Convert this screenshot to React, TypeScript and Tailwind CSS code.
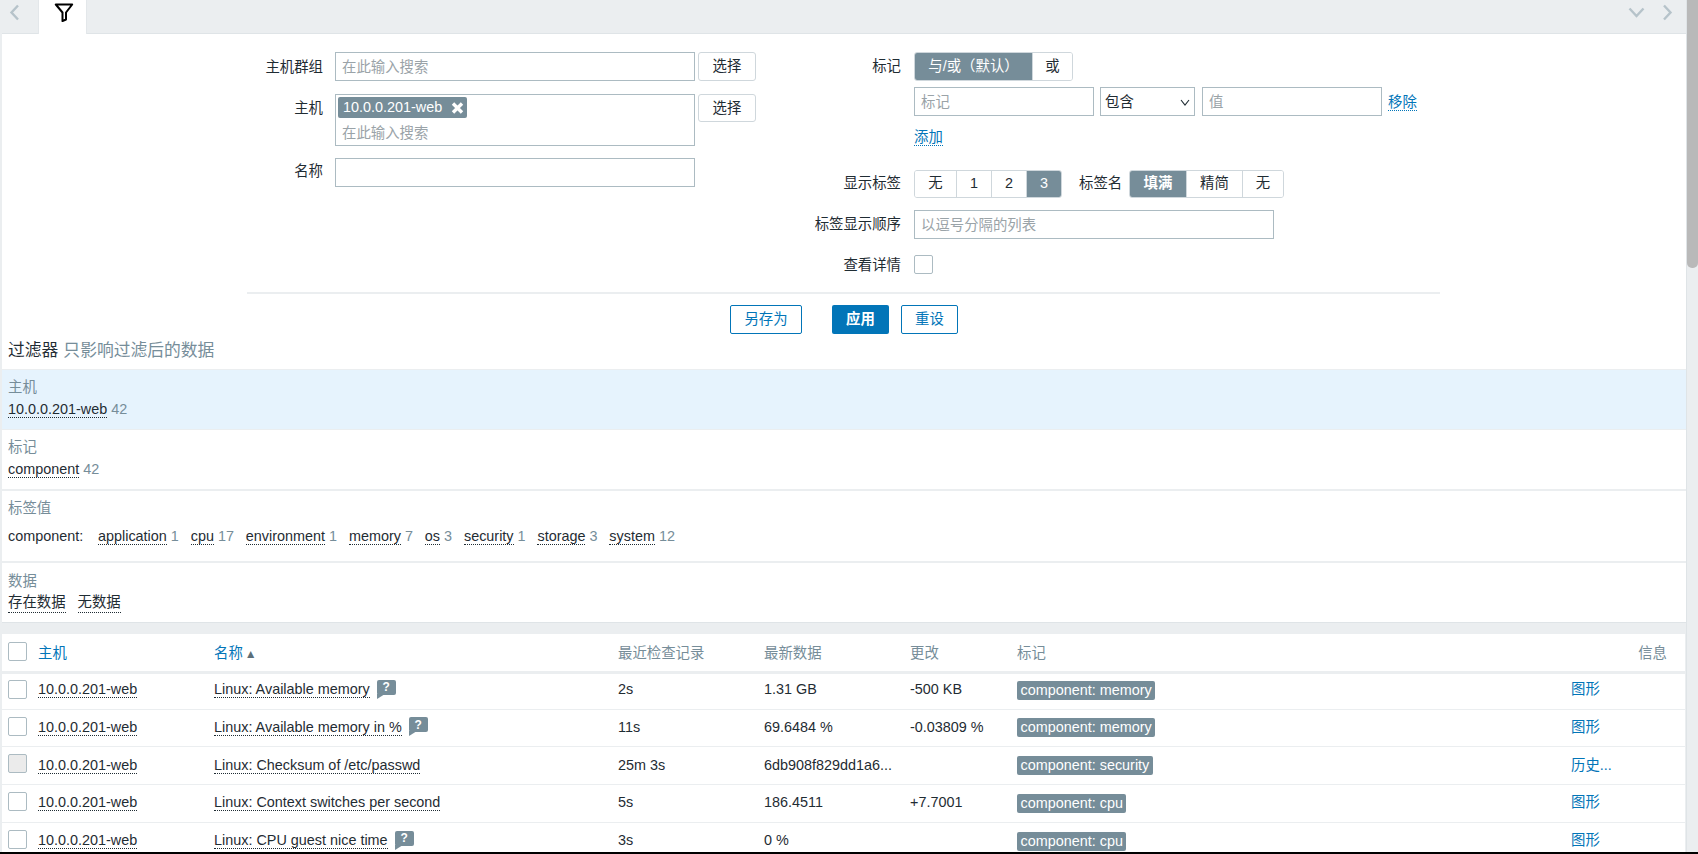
import type { ReactNode } from 'react';

const GREY = 'text-[#768d99]';

type Row = {
  name: string;
  help?: boolean;
  check: string;
  value: string;
  change?: string;
  tag: string;
  action: string;
  disabled?: boolean;
  height: string;
  nudge: string;
  chipNudge: string;
};

const rows: Row[] = [
  { name: 'Linux: Available memory', help: true, check: '2s', value: '1.31 GB', change: '-500 KB', tag: 'component: memory', action: '图形', height: 'h-[37px]', nudge: 'pb-[2px]', chipNudge: '' },
  { name: 'Linux: Available memory in %', help: true, check: '11s', value: '69.6484 %', change: '-0.03809 %', tag: 'component: memory', action: '图形', height: 'h-[37px]', nudge: '', chipNudge: 'pt-[1px]' },
  { name: 'Linux: Checksum of /etc/passwd', check: '25m 3s', value: '6db908f829dd1a6...', tag: 'component: security', action: '历史...', disabled: true, height: 'h-[38px]', nudge: 'pt-[1px]', chipNudge: 'pt-[2px]' },
  { name: 'Linux: Context switches per second', check: '5s', value: '186.4511', change: '+7.7001', tag: 'component: cpu', action: '图形', height: 'h-[38px]', nudge: '', chipNudge: 'pt-[2px]' },
  { name: 'Linux: CPU guest nice time', help: true, check: '3s', value: '0 %', tag: 'component: cpu', action: '图形', height: 'h-[38px]', nudge: '', chipNudge: 'pt-[2px]' },
];

const tagValues = [
  ['application', '1'],
  ['cpu', '17'],
  ['environment', '1'],
  ['memory', '7'],
  ['os', '3'],
  ['security', '1'],
  ['storage', '3'],
  ['system', '12'],
];

function Dotted({ children, blue }: { children: ReactNode; blue?: boolean }) {
  return (
    <span className={blue ? 'border-b border-dotted border-[#0275b8] text-[#0275b8]' : 'border-b border-dotted border-[#1f2c33]'}>
      {children}
    </span>
  );
}

function Checkbox({ disabled }: { disabled?: boolean }) {
  return (
    <span className={`block h-[19px] w-[19px] rounded-[2px] border border-[#acbbc2] ${disabled ? 'bg-[#ebebeb]' : 'bg-white'}`} />
  );
}

function Segmented({ items, active, widths, bold }: { items: string[]; active: number; widths: string[]; bold?: boolean }) {
  return (
    <div className="flex h-full overflow-hidden rounded-[3px] border border-[#cfd7dc]">
      {items.map((item, i) => (
        <span
          key={item}
          className={`flex items-center justify-center ${widths[i]} ${i > 0 ? 'border-l border-[#cfd7dc]' : ''} ${i === active ? 'bg-[#768d99] text-white' : 'bg-white text-[#1f2c33]'} ${i === active && bold ? 'font-bold' : ''}`}
        >
          {item}
        </span>
      ))}
    </div>
  );
}

function SelectButton({ height }: { height: string }) {
  return (
    <span className={`flex ${height} w-[58px] items-center justify-center rounded-[3px] border border-[#cfd7dc] bg-white pt-[1px]`}>选择</span>
  );
}

function HelpIcon() {
  return (
    <span className="relative ml-[7px] inline-flex h-[15px] w-[19px] -translate-y-[3px] items-center justify-center rounded-[2px] bg-[#768d99] text-[12px] font-bold leading-none text-white align-middle">
      ?
      <svg className="absolute left-0 top-[14px]" width="8" height="5" viewBox="0 0 8 5">
        <path d="M0 0h8L0 5z" fill="#768d99" />
      </svg>
    </span>
  );
}

function Input({ placeholder, width }: { placeholder?: string; width: string }) {
  return (
    <input
      readOnly
      placeholder={placeholder}
      className={`h-[29px] ${width} border border-[#acbbc2] bg-white px-[6px] text-[14.4px] outline-none placeholder:text-[#9aa3a8]`}
    />
  );
}

function Filter() {
  return (
    <div className="bg-white">
      <div className="ml-[245px] w-[1193px] border-b-2 border-[#ebeef0] pt-[18px]">
        <div className="flex h-[240px]">
          <div className="w-[553px]">
            <div className="flex h-[29px] items-start">
              <label className="w-[76px] pt-[5px] text-right">主机群组</label>
              <div className="ml-[12px] flex gap-[3px]">
                <Input placeholder="在此输入搜索" width="w-[360px]" />
                <SelectButton height="h-[29px]" />
              </div>
            </div>
            <div className="mt-[13px] flex items-start">
              <label className="w-[76px] pt-[4px] text-right">主机</label>
              <div className="ml-[12px] h-[52px] w-[360px] border border-[#acbbc2] bg-white pl-[2px] pt-[2px]">
                <span className="flex h-[21px] w-[129px] items-center rounded-[2px] bg-[#768d99] pl-[5px] text-white">
                  10.0.0.201-web
                  <svg className="ml-[9px]" width="13" height="12" viewBox="0 0 13 12">
                    <path d="M2 1.5l9 9M11 1.5l-9 9" stroke="#fff" strokeWidth="3.4" />
                  </svg>
                </span>
                <div className="pl-[4px] pt-[4px] leading-[22px] text-[#9aa3a8]">在此输入搜索</div>
              </div>
              <div className="ml-[3px]">
                <SelectButton height="h-[28px]" />
              </div>
            </div>
            <div className="mt-[12px] flex items-start">
              <label className="w-[76px] pt-[3px] text-right">名称</label>
              <div className="ml-[12px] flex">
                <Input width="w-[360px]" />
              </div>
            </div>
          </div>

          <div className="flex-1">
            <div className="flex h-[29px] items-center">
              <label className="w-[101px] text-right">标记</label>
              <div className="ml-[13px] h-full">
                <Segmented items={['与/或（默认）', '或']} active={0} widths={['w-[117px]', 'w-[40px]']} />
              </div>
            </div>
            <div className="ml-[114px] mt-[6px] flex items-center">
              <Input placeholder="标记" width="w-[180px]" />
              <div className="ml-[6px] flex h-[29px] w-[95px] items-center justify-between border border-[#acbbc2] pl-[4px] pr-[4px] pt-[2px]">
                包含
                <svg width="10" height="7" viewBox="0 0 10 7">
                  <path d="M1 1l4 5 4-5" fill="none" stroke="#1f2c33" strokeWidth="1.1" />
                </svg>
              </div>
              <div className="ml-[7px] flex">
                <Input placeholder="值" width="w-[180px]" />
              </div>
              <span className="ml-[6px] pt-[2px]">
                <Dotted blue>移除</Dotted>
              </span>
            </div>
            <div className="ml-[114px] mt-[11px] h-[21px] leading-[21px]">
              <Dotted blue>添加</Dotted>
            </div>
            <div className="mt-[22px] flex h-[28px] items-center">
              <label className="w-[101px] text-right">显示标签</label>
              <div className="ml-[13px] h-full">
                <Segmented items={['无', '1', '2', '3']} active={3} widths={['w-[41px]', 'w-[35px]', 'w-[35px]', 'w-[35px]']} />
              </div>
              <label className="ml-[17px] w-[44px] whitespace-nowrap">标签名</label>
              <div className="ml-[6px] h-full">
                <Segmented items={['填满', '精简', '无']} active={0} widths={['w-[56px]', 'w-[56px]', 'w-[41px]']} bold />
              </div>
            </div>
            <div className="mt-[12px] flex h-[29px] items-center">
              <label className="w-[101px] text-right">标签显示顺序</label>
              <div className="ml-[13px] flex">
                <Input placeholder="以逗号分隔的列表" width="w-[360px]" />
              </div>
            </div>
            <div className="mt-[16px] flex h-[19px] items-center">
              <label className="w-[101px] pt-[2px] text-right">查看详情</label>
              <div className="ml-[13px]">
                <Checkbox />
              </div>
            </div>
          </div>
        </div>
      </div>

      <div className="ml-[728px] mt-[11px] flex h-[29px] items-stretch">
        <span className="flex w-[72px] items-center justify-center rounded-[2px] border border-[#0275b8] pt-[1px] text-[#0275b8]">另存为</span>
        <span className="ml-[30px] flex w-[57px] items-center justify-center rounded-[2px] bg-[#0275b8] pt-[1px] font-bold text-white">应用</span>
        <span className="ml-[12px] flex w-[57px] items-center justify-center rounded-[2px] border border-[#0275b8] pt-[1px] text-[#0275b8]">重设</span>
      </div>
    </div>
  );
}

function Summary() {
  return (
    <div className="bg-white">
      <div className="flex h-[35px] items-center pb-[2px] pl-[6px] text-[16.8px]">
        过滤器<span className={`ml-[5px] ${GREY}`}>只影响过滤后的数据</span>
      </div>

      <div className="h-[61px] border-y border-[#ebeef0] bg-[#e6f3fd] pl-[6px] pt-[7px] leading-[20px]">
        <div className={GREY}>主机</div>
        <div className="mt-[2px]">
          <Dotted>10.0.0.201-web</Dotted> <span className={GREY}>42</span>
        </div>
      </div>
      <div className="h-[61px] border-b-2 border-[#ebeef0] pl-[6px] pt-[7px] leading-[20px]">
        <div className={GREY}>标记</div>
        <div className="mt-[2px]">
          <Dotted>component</Dotted> <span className={GREY}>42</span>
        </div>
      </div>
      <div className="h-[72px] border-b-2 border-[#ebeef0] pl-[6px] pt-[7px] leading-[20px]">
        <div className={GREY}>标签值</div>
        <div className="mt-[8px] flex">
          <span className="w-[90px]">component:</span>
          <div className="flex gap-[11.9px]">
            {tagValues.map(([tag, count]) => (
              <span key={tag}>
                <Dotted>{tag}</Dotted> <span className={GREY}>{count}</span>
              </span>
            ))}
          </div>
        </div>
      </div>
      <div className="h-[60px] border-b border-[#dfe4e7] pl-[6px] pt-[8px] leading-[20px]">
        <div className={GREY}>数据</div>
        <div className="mt-[1px] flex gap-[12px]">
          <Dotted>存在数据</Dotted>
          <Dotted>无数据</Dotted>
        </div>
      </div>
    </div>
  );
}

function LatestTable() {
  return (
    <table className="mt-[11px] w-[1683px] table-fixed bg-white">
      <colgroup>
        <col className="w-[36px]" />
        <col className="w-[176px]" />
        <col className="w-[404px]" />
        <col className="w-[146px]" />
        <col className="w-[146px]" />
        <col className="w-[107px]" />
        <col className="w-[554px]" />
        <col />
      </colgroup>
      <thead>
        <tr className={`h-[38px] border-b-[3px] border-[#ebeef0] text-left ${GREY}`}>
          <th className="pb-[2px] pl-[6px] font-normal">
            <Checkbox />
          </th>
          <th className="pt-[3px] font-normal text-[#0275b8]">主机</th>
          <th className="pt-[3px] font-normal text-[#0275b8]">
            名称
            <span className="ml-[2px] text-[12px] text-[#5c6f79]">▲</span>
          </th>
          <th className="pt-[3px] font-normal">最近检查记录</th>
          <th className="pt-[3px] font-normal">最新数据</th>
          <th className="pt-[3px] font-normal">更改</th>
          <th className="pt-[3px] font-normal">标记</th>
          <th className="pr-[18px] pt-[3px] text-right font-normal">信息</th>
        </tr>
      </thead>
      <tbody>
        {rows.map((row) => (
          <tr key={row.name} className={`${row.height} border-b border-[#ebeef0]`}>
            <td className="pb-[3px] pl-[6px]">
              <Checkbox disabled={row.disabled} />
            </td>
            <td className={row.nudge}>
              <Dotted>10.0.0.201-web</Dotted>
            </td>
            <td className={row.nudge}>
              <Dotted>{row.name}</Dotted>
              {row.help && <HelpIcon />}
            </td>
            <td className={row.nudge}>{row.check}</td>
            <td className={row.nudge}>{row.value}</td>
            <td className={row.nudge}>{row.change}</td>
            <td className={row.chipNudge}>
              <span className="inline-block h-[19px] rounded-[2px] bg-[#768d99] px-[3.5px] leading-[19px] text-white">{row.tag}</span>
            </td>
            <td className={`${row.nudge} text-[#0275b8]`}>{row.action}</td>
          </tr>
        ))}
      </tbody>
    </table>
  );
}

export default function App() {
  return (
    <div className="flex h-[854px] flex-col overflow-hidden bg-white text-[14.4px] text-[#1f2c33] [font-family:'Liberation_Sans','Noto_Sans_CJK_SC',sans-serif]">
      <div className="flex min-h-0 flex-1">
        <div className="min-w-0 flex-1 overflow-hidden bg-[#ebeef0] pl-[2px]">
          <div className="flex h-[34px] items-start border-b border-[#dfe4e7] bg-[#ebeef0]">
            <svg className="ml-[7px] mt-[4px]" width="11" height="17" viewBox="0 0 11 17">
              <path d="M9 1.5L2.5 8.5 9 15.5" fill="none" stroke="#b6c3ca" strokeWidth="2.4" />
            </svg>
            <div className="ml-[18px] flex h-[34px] w-[49px] justify-center border-x border-[#e3e7ea] bg-white pl-[2px] pt-[3px]">
              <svg width="20" height="19" viewBox="0 0 20 19">
                <path d="M1.8 1.5h16.4L12 9.5v7l-3.5 1.5v-8.5z" fill="none" stroke="#000" strokeWidth="2" strokeLinejoin="round" />
              </svg>
            </div>
            <svg className="ml-auto mt-[7px]" width="17" height="11" viewBox="0 0 17 11">
              <path d="M1.5 1.5L8.5 9l7-7.5" fill="none" stroke="#b6c3ca" strokeWidth="2.4" />
            </svg>
            <svg className="ml-[17px] mr-[13px] mt-[4px]" width="11" height="17" viewBox="0 0 11 17">
              <path d="M2 1.5L8.5 8.5 2 15.5" fill="none" stroke="#b6c3ca" strokeWidth="2.4" />
            </svg>
          </div>
          <Filter />
          <Summary />
          <LatestTable />
        </div>
        <div className="w-[12px] shrink-0 border-l border-[#dfe4e7] bg-[#ebeef0]">
          <div className="h-[268px] rounded-b-[5px] bg-[#b9b9b9]" />
        </div>
      </div>
      <div className="h-[2px] shrink-0 bg-black" />
    </div>
  );
}
